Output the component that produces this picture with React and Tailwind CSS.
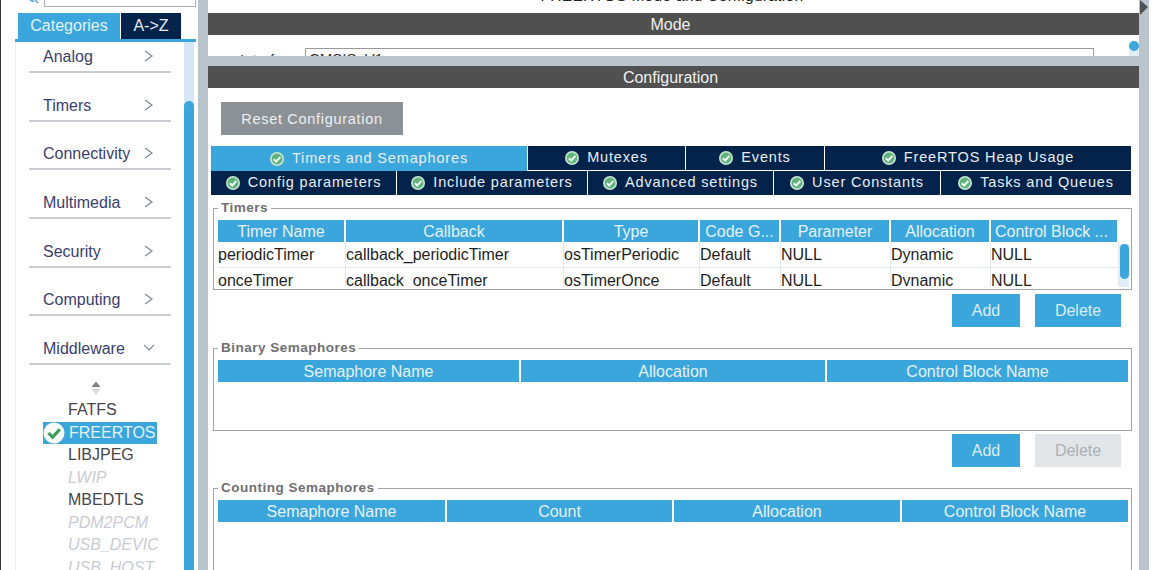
const F = "font-['Liberation_Sans',Arial,sans-serif]";

function TabCheck() {
  return (
    <svg width="14" height="14" viewBox="0 0 14 14" className="shrink-0">
      <circle cx="7" cy="7" r="7" fill="#c9e6d3" />
      <circle cx="7" cy="7" r="5.4" fill="#5fb47c" />
      <path d="M3.8 7.2 L6.2 9.5 L10.4 4.9" fill="none" stroke="#f2faf5" strokeWidth="2" />
    </svg>
  );
}

function BigCheck() {
  return (
    <svg width="22" height="22" viewBox="0 0 22 22" className="shrink-0">
      <circle cx="11" cy="11" r="10.5" fill="#f5faf7" />
      <path d="M5.5 11 L9.6 15.2 L16.8 7.4" fill="none" stroke="#3f9f5f" strokeWidth="3.2" />
    </svg>
  );
}

function Chevron({ open }) {
  return (
    <svg width="10" height="12" viewBox="0 0 10 12">
      <path d={open ? "M0 3 L5 8 L10 3" : "M1 1 L8 6 L1 11"} fill="none" stroke="#7b8794" strokeWidth="1.2" />
    </svg>
  );
}

function Cat({ name, open, h = "h-[48.7px]" }) {
  return (
    <div className={`${h} ml-[13px] w-[142px] border-b-2 border-[#c9ccd2] flex items-end pb-[4px] pl-[14px] text-[16px] text-[#39406f] justify-between`}>
      <span className="leading-[20px]">{name}</span>
      <span className="mr-[17px] mb-[5px]"><Chevron open={open} /></span>
    </div>
  );
}

function Mid({ children, dim }) {
  return (
    <div className={`h-[22.5px] leading-[22px] pl-[52px] text-[16px] whitespace-nowrap overflow-hidden w-[142px] ${dim ? "italic text-[#c9ccd2]" : "text-[#46464c]"}`}>
      {children}
    </div>
  );
}

function Tab({ w, active, top, children }) {
  return (
    <div className={`${w} h-full flex items-center justify-center gap-[8px] text-[14.5px] tracking-[0.85px] text-[#e8eef3] whitespace-nowrap ${active ? "bg-[#3aa6dc]" : "bg-[#03234b]"} ${top && !active ? "border-b border-white" : ""}`}>
      <TabCheck />
      <span>{children}</span>
    </div>
  );
}

function Group({ title, h, columns, rows, scroll }) {
  return (
    <fieldset className={`${h} mx-[5px] w-[919px] border border-[#a2a5a8] relative`}>
      <legend className="absolute -top-[9px] left-[4px] bg-white px-[3px] text-[13.5px] tracking-[0.5px] font-bold leading-[16px] text-[#6f6f73]">{title}</legend>
      <div className="flex gap-[2px] mt-[11px] ml-[4px] h-[22px]">
        {columns.map(([label, w, left]) => (
          <div key={label} style={{ width: w }} className={`bg-[#3aa6dc] text-[#e4f2fa] text-[16px] leading-[24px] whitespace-nowrap overflow-hidden shrink-0 ${left ? "text-left pl-[4px]" : "text-center"}`}>{label}</div>
        ))}
      </div>
      {rows && (
        <div className="ml-[4px] h-[44px] overflow-hidden">
          {rows.map((r, i) => (
            <div key={i} className="flex h-[26px] border-b border-[#e4e7ec]">
              {r.map((c, j) => (
                <div key={j} style={{ width: columns[j][1] + 2 }} className="shrink-0 text-[16px] leading-[26px] text-[#1e1e22] border-r border-[#e4e7ec]">{c}</div>
              ))}
            </div>
          ))}
        </div>
      )}
      {scroll && (
        <div className="absolute right-[2px] top-[35px] w-[10px] h-[43px] bg-[#e0edf6]">
          <div className="h-[35px] rounded-[5px] bg-[#3aa6dc] w-[9px] mx-auto" />
        </div>
      )}
    </fieldset>
  );
}

function Buttons({ disabled }) {
  return (
    <div className="flex justify-end pr-[18px] gap-[15px] h-[33px]">
      <div className="w-[68px] bg-[#3aa6dc] text-[#d8edf8] text-[16px] flex items-center justify-center">Add</div>
      <div className={`w-[86px] text-[16px] flex items-center justify-center ${disabled ? "bg-[#e3e6e8] text-[#a9b0b5]" : "bg-[#3aa6dc] text-[#d8edf8]"}`}>Delete</div>
    </div>
  );
}

export default function App() {
  return (
    <div className={`${F} w-[1162px] h-[570px] overflow-hidden flex bg-white`}>
      <div className="w-[1px] bg-[#3a3a3a]" />
      {/* Sidebar */}
      <aside className="w-[197px] h-full flex flex-col overflow-hidden pl-[14px]">
        <div className="relative h-[13px] shrink-0">
          <div className="ml-[29px] w-[152px] h-[7px] border border-t-0 border-[#aeb1b4]" />
          <svg width="10" height="6" viewBox="0 0 10 6" className="absolute left-[14px] top-0">
            <path d="M1 0 L5 1.5 M6 0 L9 3" stroke="#3aa6dc" strokeWidth="1.4" fill="none" />
          </svg>
        </div>
        <div className="flex h-[26px] shrink-0 pl-[3px]">
          <div className="w-[102px] bg-[#3aa6dc] text-[#e4f2fa] text-[16px] leading-[25px] text-center">Categories</div>
          <div className="ml-[1px] w-[60px] bg-[#03234b] text-[#e8eef3] text-[16px] leading-[25px] text-center">A-&gt;Z</div>
        </div>
        <div className="h-[3px] w-[181px] bg-[#3aa6dc] shrink-0" />
        <div className="flex flex-1 min-h-0">
          <div className="w-[169px] overflow-hidden border-l border-[#eceff2]">
            <Cat name="Analog" h="h-[31px]" />
            <Cat name="Timers" />
            <Cat name="Connectivity" />
            <Cat name="Multimedia" />
            <Cat name="Security" />
            <Cat name="Computing" />
            <Cat name="Middleware" open />
            <div className="mt-[12px] pl-[74px] h-[22px] pt-[4px]">
              <svg width="12" height="15" viewBox="0 0 12 15" className="block">
                <path d="M6 0.5 L10.5 6 L1.5 6 Z" fill="#7d8084" />
                <path d="M6 14 L10.5 8 L1.5 8 Z" fill="#d8dadc" />
              </svg>
            </div>
            <Mid>FATFS</Mid>
            <div className="ml-[27px] w-[114px] h-[22.5px] bg-[#3aa6dc] flex items-center text-[16px] text-[#e4f2fa] gap-[4px] whitespace-nowrap overflow-hidden">
              <BigCheck />
              <span>FREERTOS</span>
            </div>
            <Mid>LIBJPEG</Mid>
            <Mid dim>LWIP</Mid>
            <Mid>MBEDTLS</Mid>
            <Mid dim>PDM2PCM</Mid>
            <Mid dim>USB_DEVICE</Mid>
            <Mid dim>USB_HOST</Mid>
          </div>
          <div className="w-[10px] bg-[#d6e6f4]">
            <div className="mt-[59px] h-[500px] rounded-t-[5px] bg-[#3aa6dc]" />
          </div>
        </div>
      </aside>
      {/* Splitter */}
      <div className="w-[10px] bg-[#b9c4cc] shrink-0" />
      {/* Main */}
      <main className="w-[931px] h-full flex flex-col shrink-0 overflow-hidden">
        <div className="h-[13px] shrink-0 relative overflow-hidden">
          <div className="absolute left-0 right-0 -top-[12px] text-center text-[15.5px] tracking-[0.3px] text-[#222] leading-[16px] pr-[3px]">FREERTOS Mode and Configuration</div>
        </div>
        <div className="h-[22px] bg-[#505050] text-[#f0f0f0] text-[16px] leading-[23px] text-center pr-[6px] shrink-0">Mode</div>
        <div className="h-[21px] shrink-0 relative overflow-hidden">
          <div className="absolute left-[32px] top-[17px] text-[15px] text-[#333] leading-[16px]">Interface</div>
          <div className="absolute left-[97px] top-[13px] w-[789px] h-[20px] border border-[#9a9a9a] pl-[3px] pt-[1px] text-[15px] leading-[18px] text-[#333]">CMSIS_V1</div>
          <div className="absolute right-0 top-[15px] w-[10px] h-[10px] bg-[#e0edf6]" />
          <div className="absolute right-0 top-[6px] w-[10px] h-[10px] rounded-full bg-[#3aa6dc]" />
        </div>
        <div className="h-[10px] bg-[#b9c4cc] shrink-0" />
        <div className="h-[22px] bg-[#505050] text-[#f0f0f0] text-[16px] leading-[23px] text-center pr-[6px] shrink-0">Configuration</div>
        <div className="pl-[13px] pt-[14px] shrink-0">
          <div className="w-[182px] h-[33px] pt-[2px] bg-[#8c9196] text-[#edf0f2] text-[14.5px] tracking-[0.7px] flex items-center justify-center">Reset Configuration</div>
        </div>
        <div className="ml-[3px] mt-[11px] w-[920px] shrink-0 flex flex-col h-[49px]">
          <div className="flex gap-px h-[25px]">
            <Tab w="w-[316px]" active top>Timers and Semaphores</Tab>
            <Tab w="w-[157px]" top>Mutexes</Tab>
            <Tab w="w-[138px]" top>Events</Tab>
            <Tab w="w-[306px]" top>FreeRTOS Heap Usage</Tab>
          </div>
          <div className="flex gap-px h-[24px]">
            <Tab w="w-[185px]">Config parameters</Tab>
            <Tab w="w-[190px]">Include parameters</Tab>
            <Tab w="w-[185px]">Advanced settings</Tab>
            <Tab w="w-[166px]">User Constants</Tab>
            <Tab w="w-[190px]">Tasks and Queues</Tab>
          </div>
        </div>
        <div className="mt-[13px] shrink-0">
          <Group
            title="Timers"
            h="h-[82px]"
            scroll
            columns={[["Timer Name", 126], ["Callback", 216], ["Type", 134], ["Code G...", 79], ["Parameter", 108], ["Allocation", 98], ["Control Block ...", 126, true]]}
            rows={[
              ["periodicTimer", "callback_periodicTimer", "osTimerPeriodic", "Default", "NULL", "Dynamic", "NULL"],
              ["onceTimer", "callback_onceTimer", "osTimerOnce", "Default", "NULL", "Dynamic", "NULL"],
            ]}
          />
        </div>
        <div className="mt-[4px] shrink-0"><Buttons /></div>
        <div className="mt-[21px] shrink-0">
          <Group title="Binary Semaphores" h="h-[83px]" columns={[["Semaphore Name", 301], ["Allocation", 304], ["Control Block Name", 301]]} />
        </div>
        <div className="mt-[3px] shrink-0"><Buttons disabled /></div>
        <div className="mt-[21px] shrink-0">
          <Group title="Counting Semaphores" h="h-[90px]" columns={[["Semaphore Name", 227], ["Count", 225], ["Allocation", 226], ["Control Block Name", 226]]} />
        </div>
      </main>
      {/* Right rail */}
      <div className="w-[10px] bg-[#b9c4cc] shrink-0 relative">
        <svg width="10" height="16" viewBox="0 0 10 16" className="absolute top-0 left-0">
          <path d="M1 0 L9 7 L1 15 Z" fill="#505050" />
        </svg>
      </div>
      <div className="flex-1 bg-white" />
    </div>
  );
}
